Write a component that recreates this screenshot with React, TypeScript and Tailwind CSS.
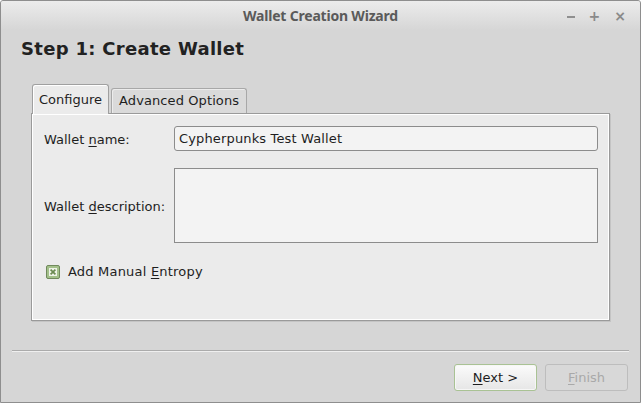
import React from 'react';

const font = { fontFamily: '"DejaVu Sans", Verdana, sans-serif' };

const Mn: React.FC<{ children: React.ReactNode }> = ({ children }) => (
  <span className="underline underline-offset-2">{children}</span>
);

const App: React.FC = () => {
  return (
    <div className="w-[641px] h-[403px] bg-[#d6d6d6] border border-[#8e8e8e] rounded-t-[3px] flex flex-col text-[#1e1e1e] overflow-hidden" style={font}>
      {/* title bar */}
      <div className="h-[29px] shrink-0 relative flex items-center justify-center bg-gradient-to-b from-[#ececec] to-[#d6d6d6]">
        <span className="text-[14px] font-bold text-[#5a5a5a] font-['Noto_Sans',sans-serif] tracking-[-0.2px]">Wallet Creation Wizard</span>
        <div className="absolute right-[14px] top-[8px] flex items-center gap-[14px] text-[#8a8a8a] text-[14px] font-bold leading-none">
          <span className="w-[8px] h-[2px] bg-[#8f8f8f] mt-[2px]" />
          <span>+</span>
          <span>×</span>
        </div>
      </div>

      <h1 className="pl-[20px] mt-[7px] text-[18px] font-bold leading-[24px] text-[#222] tracking-[0.3px]">Step 1: Create Wallet</h1>

      {/* tabs */}
      <div className="ml-[30px] mr-[30px] mt-[23px] flex flex-col">
        <div className="flex items-end h-[30px] pl-[1px] relative z-10">
          <div className="h-[30px] px-[6px] flex items-center bg-[#ebebeb] border border-[#a0a0a0] border-b-0 rounded-t-[3px] text-[13px] shadow-[inset_1px_1px_0_#fff]">
            Configure
          </div>
          <div className="h-[25px] ml-[2px] mb-[1px] px-[7px] flex items-center bg-[#dadada] border border-[#a8a8a8] border-b-0 rounded-t-[3px] text-[13px] tracking-[0.1px] shadow-[inset_1px_1px_0_#ececec]">
            Advanced Options
          </div>
        </div>
        <div className="h-[208px] -mt-[1px] bg-[#ebebeb] border border-[#9a9a9a] shadow-[inset_1px_1px_0_#fff,inset_-1px_-1px_0_#fff,1px_1px_0_#c4c4c4] pl-[12px] pr-[11px] pt-[12px] flex flex-col text-[13px]">
          <div className="flex items-center h-[25px]">
            <div className="w-[130px] pt-[2px]">Wallet <Mn>n</Mn>ame:</div>
            <div className="flex-1 h-[25px] rounded-[3px] border border-[#8c8c8c] bg-[#f3f3f3] flex items-center pl-[4px] pt-[1px] tracking-[0.15px]">
              Cypherpunks Test Wallet
            </div>
          </div>
          <div className="flex items-center mt-[17px] h-[75px]">
            <div className="w-[130px] pt-[2px]">Wallet <Mn>d</Mn>escription:</div>
            <div className="flex-1 h-[75px] border border-[#8c8c8c] bg-[#f3f3f3]" />
          </div>
          <div className="flex items-center mt-[19px] pl-[2px] gap-[8px]">
            <svg width="14" height="14" viewBox="0 0 14 14">
              <rect x="0.5" y="0.5" width="13" height="13" rx="1.5" fill="#a3c08a" stroke="#70895c" />
              <rect x="3" y="3" width="8" height="8" fill="#eef3e8" />
              <path d="M4.6 4.6 L9.4 9.4 M9.4 4.6 L4.6 9.4" stroke="#6b8a52" strokeWidth="1.7" />
            </svg>
            <span className="tracking-[0.2px]">Add Manual <Mn>E</Mn>ntropy</span>
          </div>
        </div>
      </div>

      {/* separator */}
      <div className="mx-[11px] mt-[29px] h-[2px] border-t border-[#ababab] bg-[#efefef]" />

      {/* buttons */}
      <div className="flex justify-end gap-[8px] mr-[12px] mt-[12px] text-[13px]">
        <button className="w-[83px] h-[27px] rounded-[3px] border border-[#a9c294] bg-gradient-to-b from-[#fbfbfb] to-[#e6e6e6] shadow-[inset_0_0_0_1px_#f6f6f6]">
          <Mn>N</Mn>ext &gt;
        </button>
        <button className="w-[83px] h-[27px] rounded-[3px] border border-[#bdbdbd] bg-[#d8d8d8] text-[#a9a9a9]">
          <Mn>F</Mn>inish
        </button>
      </div>
    </div>
  );
};

export default App;
